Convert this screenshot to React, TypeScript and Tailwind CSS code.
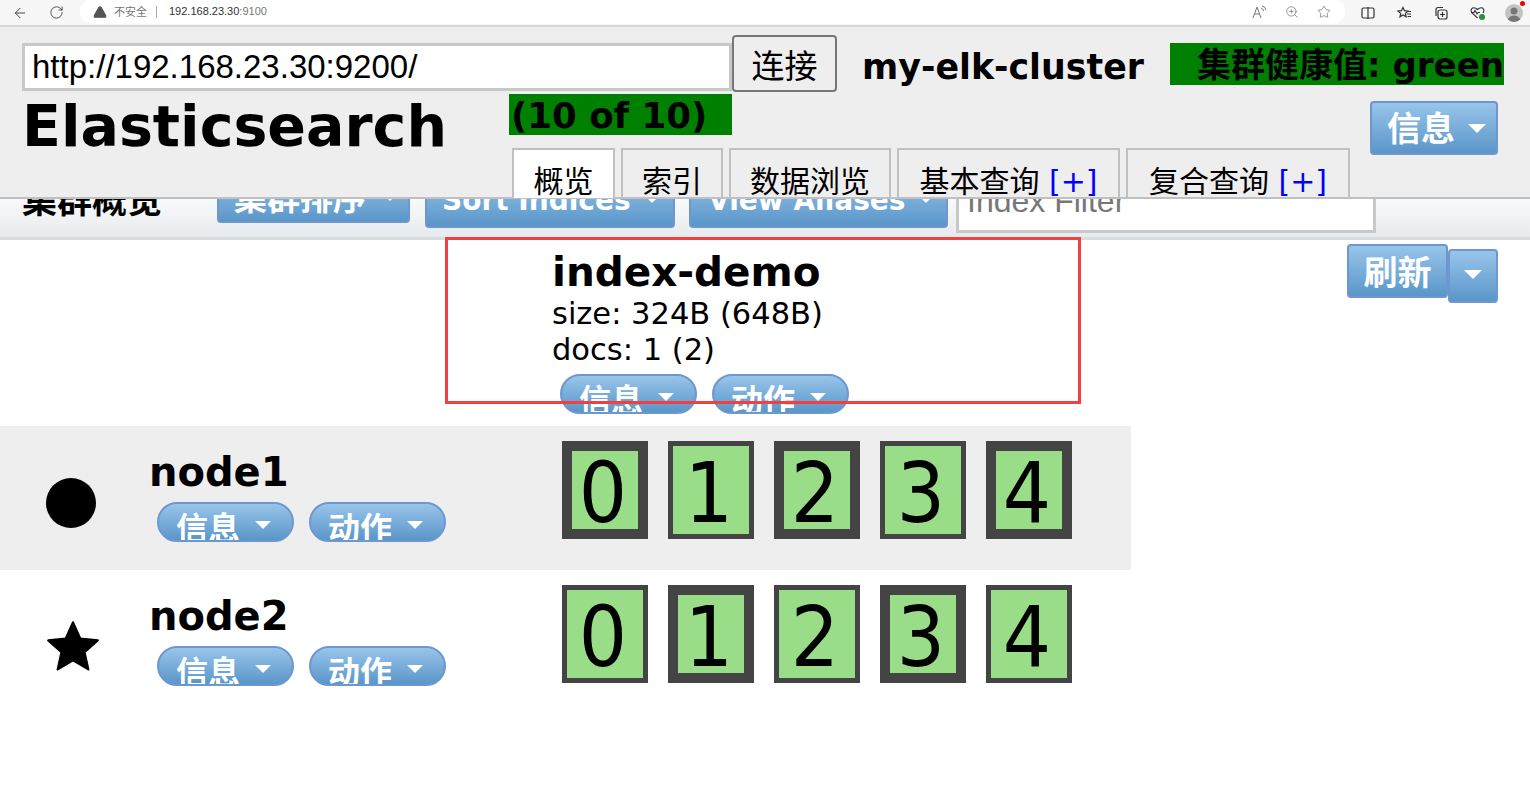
import { ArrowLeft, RotateCw, TriangleAlert, ZoomIn, Star } from "lucide-react";

const cjk = "font-['DejaVu_Sans','Noto_Sans_CJK_SC',sans-serif]";
const blue =
  "bg-gradient-to-b from-[#98c5ea] to-[#5a96c9] border-2 border-[#6f97cf] text-white font-bold";

function Caret({ w = 16, h = 8, className }: { w?: number; h?: number; className?: string }) {
  return (
    <svg width={w} height={h} viewBox="0 0 16 8" preserveAspectRatio="none" className={`shrink-0 ${className ?? ""}`}>
      <path d="M0 0H16L8 8Z" fill="#fff" />
    </svg>
  );
}

function PillButton({ label }: { label: string }) {
  return (
    <div className={`${blue} w-[137px] h-[40px] rounded-[20px] flex items-center overflow-hidden pl-[17px] gap-[15px] text-[32px] leading-[40px]`}>
      <span className="pt-[13px] whitespace-nowrap">{label}</span>
      <Caret className="mt-[6px]" />
    </div>
  );
}

function Shard({ n, primary }: { n: number; primary: boolean }) {
  return (
    <div
      className={`w-[86px] h-[98px] box-border bg-[#99dd88] border-[#444444] text-[76px] leading-none flex items-center justify-center pr-[4px] pt-[6px] ${primary ? "border-[10px]" : "border-[5px]"}`}
    >
      <span className="inline-block scale-y-[1.1]">{n}</span>
    </div>
  );
}

function BrowserBar() {
  return (
    <div className="h-[27px] bg-[#f7f7f7] border-b-2 border-[#d6d6d6] flex items-center box-border font-['Liberation_Sans',sans-serif]">
      <ArrowLeft className="w-[16px] h-[16px] ml-[12px] text-[#444]" strokeWidth={1.5} />
      <RotateCw className="w-[15px] h-[15px] ml-[21px] text-[#444]" strokeWidth={1.5} />
      <div className="ml-[16px] w-[1265px] h-[25px] -mt-[2px] bg-white rounded-[13px] flex items-center pl-[13px] text-[11px]">
        <TriangleAlert className="w-[14px] h-[14px] fill-[#555] text-[#555]" />
        <span className="ml-[7px] text-[#777] font-['Noto_Sans_CJK_SC',sans-serif]">不安全</span>
        <span className="ml-[9px] w-px h-[12px] bg-[#aaa]" />
        <span className="ml-[12px] text-[#333]">
          192.168.23.30<span className="text-[#777]">:9100</span>
        </span>
        <div className="ml-auto mr-[14px] flex items-center gap-[18px] text-[#777]">
          <svg width="15" height="14" viewBox="0 0 15 14" fill="none" stroke="currentColor" strokeWidth="1">
            <path d="M1 13L5 2l4 11M2.500 9h5" />
            <path d="M9 3q2 .5 2.500 3M10 1q3.500 .5 4 4" />
          </svg>
          <ZoomIn className="w-[14px] h-[14px]" strokeWidth={1.3} />
          <Star className="w-[14px] h-[14px]" strokeWidth={1.3} />
        </div>
      </div>
      <div className="flex items-center gap-[22px] ml-[16px] text-[#333]">
        <svg width="14" height="14" viewBox="0 0 14 14" fill="none" stroke="currentColor" strokeWidth="1.2">
          <rect x="1" y="2" width="12" height="10" rx="1.5" />
          <path d="M7 1v12" />
        </svg>
        <svg width="15" height="14" viewBox="0 0 15 14" fill="none" stroke="currentColor" strokeWidth="1.2">
          <path d="M6 1.500l1.500 3.200 3.400.4-2.500 2.300.7 3.400L6 8.900 3 10.800l.7-3.400L1 5.100l3.400-.4z" />
          <path d="M10 8h4M10.500 10.500h3.500M11 5.500h3" />
        </svg>
        <svg width="14" height="14" viewBox="0 0 14 14" fill="none" stroke="currentColor" strokeWidth="1.2">
          <path d="M2 10V4q0-2.500 2-2.500h5" />
          <rect x="4" y="4" width="9" height="9" rx="2" />
          <path d="M8.500 6v5M6 8.500h5" />
        </svg>
        <div className="relative w-[15px] h-[14px]">
          <svg width="15" height="14" viewBox="0 0 15 14" fill="none" stroke="currentColor" strokeWidth="1.1">
            <path d="M7.500 12L2 7Q0 4 2.500 2 5 1 7.500 3.500 10 1 12.500 2 15 4 13 7" />
            <path d="M1 6.500h3l1-2 2 3.500 1-1.500h2" />
          </svg>
          <span className="absolute right-0 bottom-0 w-[6px] h-[6px] rounded-full bg-[#2e8b3a]" />
        </div>
      </div>
      <div className="relative ml-[20px] w-[18px] h-[18px] rounded-full bg-[#c4c4c4]">
        <svg width="18" height="18" viewBox="0 0 18 18" className="rounded-full">
          <circle cx="9" cy="7" r="3.500" fill="#777" />
          <path d="M2 18q1-6.500 7-6.500t7 6.500z" fill="#777" />
        </svg>
        <span className="absolute -top-[3px] -right-[2px] w-[5px] h-[5px] rounded-full bg-[#ee0000]" />
      </div>
    </div>
  );
}

function Tab({ children, active, w }: { children: React.ReactNode; active?: boolean; w: string }) {
  return (
    <div
      className={`${w} h-[50px] box-border border-2 border-b-0 border-[#c0c0c0] text-[30px] leading-[64px] text-center whitespace-nowrap overflow-hidden ${active ? "bg-white" : ""}`}
    >
      {children}
    </div>
  );
}

function Header() {
  return (
    <div className="relative z-10 h-[172px] bg-[#eeeeee] border-b-2 border-[#c0c0c0] box-border pt-[8px] pl-[22px]">
      <div className="flex items-start">
        <div className="w-[710px] h-[48px] mt-[8px] box-border border-[3px] border-[#c8c8c8] bg-white text-[33px] leading-[42px] pl-[7px] font-['Liberation_Sans',sans-serif]">
          http://192.168.23.30:9200/
        </div>
        <div className="w-[105px] h-[57px] box-border border-2 border-[#777] rounded-[4px] text-[33px] leading-[60px] text-center font-normal">
          连接
        </div>
        <div className="ml-[25px] mt-[11px] text-[34.800px] leading-[42px] font-bold whitespace-nowrap">my-elk-cluster</div>
        <div className="ml-[26px] mt-[8px] w-[334px] h-[42px] bg-[#008000] text-[34px] leading-[44px] font-bold text-right whitespace-nowrap">
          集群健康值: green
        </div>
      </div>
      <div className="flex items-start mt-[4px]">
        <div className="w-[487px] text-[57px] leading-[68px] font-bold -mt-[4px]">Elasticsearch</div>
        <div className="flex flex-col">
          <div className="w-[223px] h-[41px] -mt-[2px] bg-[#008000] text-[35.600px] leading-[43px] font-bold pl-[2px] whitespace-nowrap">
            (10 of 10)
          </div>
          <div className="flex gap-[6px] mt-[13px] ml-[3px]">
            <Tab active w="w-[103px]">概览</Tab>
            <Tab w="w-[102px]">索引</Tab>
            <Tab w="w-[162px]">数据浏览</Tab>
            <Tab w="w-[223px]">基本查询 <span className="text-[#0000ff]">[+]</span></Tab>
            <Tab w="w-[224px]">复合查询 <span className="text-[#0000ff]">[+]</span></Tab>
          </div>
        </div>
        <div className={`${blue} ml-auto mr-[32px] mt-[5px] w-[128px] h-[54px] rounded-[4px] flex items-center pl-[15px] gap-[13px] text-[34px]`}>
          <span className="pt-[2px]">信息</span>
          <Caret w={18} h={9} />
        </div>
      </div>
    </div>
  );
}

function Toolbar() {
  return (
    <div className="h-[41px] box-border border-b-[3px] border-[#d8dcde] bg-gradient-to-b from-[#f8f9fa] to-[#e8ebed] overflow-hidden flex items-start pl-[22px]">
      <div className="w-[195px] text-[35px] leading-[40px] font-bold -mt-[18px] whitespace-nowrap">集群概览</div>
      <div className={`${blue} w-[193px] h-[50px] -mt-[26px] rounded-[4px] flex items-center pl-[15px] gap-[18px] text-[33px] leading-[40px] whitespace-nowrap`}>
        <span className="pt-[2px]">集群排序</span>
        <Caret w={12} h={6} />
      </div>
      <div className={`${blue} ml-[15px] w-[250px] h-[56px] -mt-[27px] rounded-[4px] flex items-center pl-[15px] gap-[15px] text-[28px] leading-[40px] whitespace-nowrap`}>
        <span className="pt-[2px]">Sort Indices</span>
        <Caret w={12} h={6} />
      </div>
      <div className={`${blue} ml-[14px] w-[259px] h-[56px] -mt-[27px] rounded-[4px] flex items-center pl-[17px] gap-[15px] text-[28px] leading-[40px] whitespace-nowrap`}>
        <span className="pt-[2px]">View Aliases</span>
        <Caret w={12} h={6} />
      </div>
      <div className="ml-[8px] w-[420px] h-[47px] -mt-[13px] box-border border-[3px] border-[#c8c8c8] bg-white text-[32px] leading-[24px] pl-[8px] text-[#777] font-['Liberation_Sans',sans-serif] whitespace-nowrap">
        Index Filter
      </div>
    </div>
  );
}

function NodeRow({ name, mark, shaded, primary }: { name: string; mark: React.ReactNode; shaded?: boolean; primary: number[] }) {
  return (
    <div className={`w-[1131px] h-[144px] flex ${shaded ? "bg-[#eeeeee]" : ""}`}>
      <div className="w-[46px]" />
      <div className="w-[103px] pt-[52px]">{mark}</div>
      <div className="w-[413px] pt-[22px]">
        <div className="text-[40px] leading-[48px] font-bold">{name}</div>
        <div className="flex gap-[15px] ml-[8px] mt-[6px]">
          <PillButton label="信息" />
          <PillButton label="动作" />
        </div>
      </div>
      <div className="flex gap-[20px] pt-[15px] items-start">
        {[0, 1, 2, 3, 4].map((i) => (
          <Shard key={i} n={i} primary={primary.includes(i)} />
        ))}
      </div>
    </div>
  );
}

export default function App() {
  return (
    <div className={`relative w-[1530px] h-[812px] bg-white overflow-hidden text-black ${cjk}`}>
      <BrowserBar />
      <Header />
      <Toolbar />

      <div className="flex h-[186px]">
        <div className="ml-[552px] w-[795px]">
          <div className="text-[40.500px] leading-[50px] font-bold mt-[7px]">index-demo</div>
          <div className="text-[30.500px] leading-[36px] -mt-[1px]">size: 324B (648B)</div>
          <div className="text-[30.500px] leading-[36px]">docs: 1 (2)</div>
          <div className="flex gap-[15px] ml-[8px] mt-[6px]">
            <PillButton label="信息" />
            <PillButton label="动作" />
          </div>
        </div>
        <div className="flex items-start mt-[4px]">
          <div className={`${blue} w-[101px] h-[54px] rounded-[4px] flex items-center justify-center text-[34px]`}>
            <span className="pt-[5px]">刷新</span>
          </div>
          <div className={`${blue} w-[50px] h-[54px] mt-[5px] rounded-[4px] flex items-center justify-center`}>
            <Caret w={18} h={9} className="-mt-[3px]" />
          </div>
        </div>
      </div>

      <NodeRow name="node1" shaded primary={[0, 2, 4]} mark={<div className="w-[50px] h-[50px] rounded-full bg-black" />} />
      <NodeRow
        name="node2"
        primary={[1, 3]}
        mark={
          <svg width="54" height="54" viewBox="0 0 24 24" className="-mt-[3px]">
            <path d="M12 1.500l3.200 7.200 7.800.8-5.900 5.200 1.700 7.700L12 18.400l-6.800 4 1.700-7.700L1 9.500l7.800-.8z" fill="#000" stroke="#000" strokeLinejoin="round" />
          </svg>
        }
      />

      {/* red annotation box */}
      <div className="absolute left-[445px] top-[237px] w-[636px] h-[167px] border-[3px] border-[#f04040] box-border" />
    </div>
  );
}
